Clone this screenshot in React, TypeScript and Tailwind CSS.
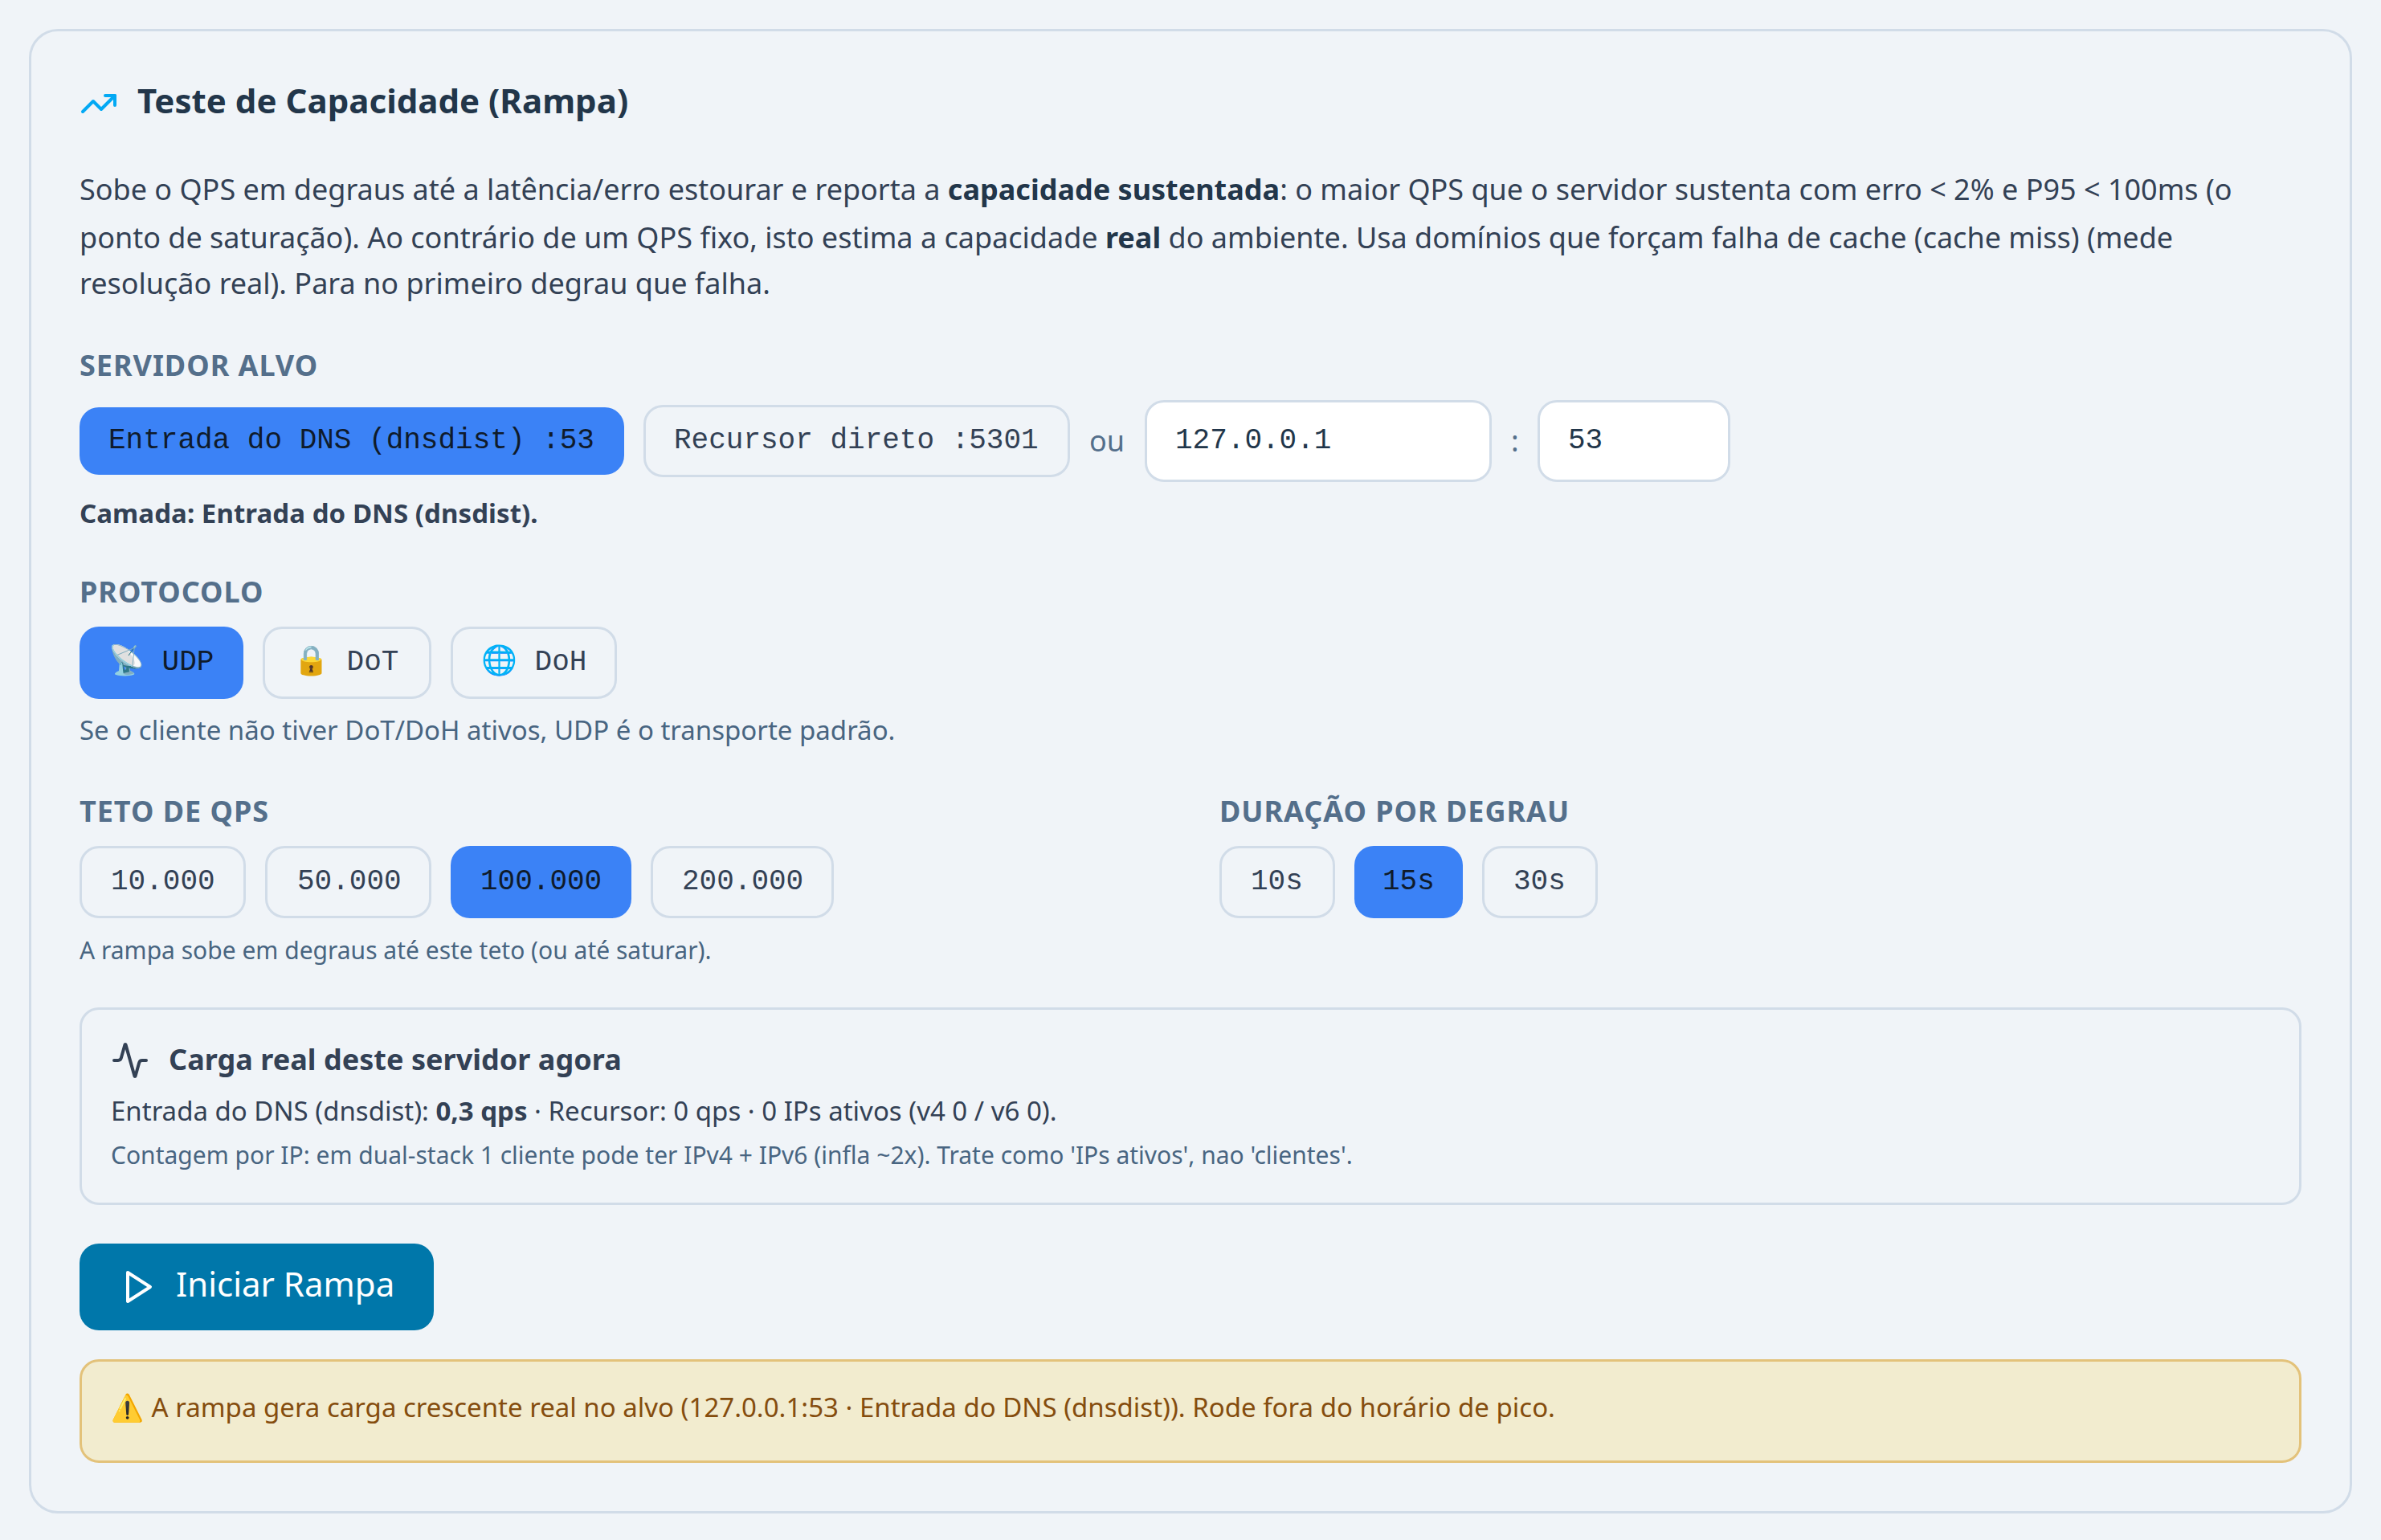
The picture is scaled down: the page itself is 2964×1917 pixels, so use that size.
import React from "react";

const label =
  "mb-[19px] pt-px text-[36px] leading-[48px] font-bold uppercase tracking-[0.97px] text-[#546f8b]";

function Chip({
  active = false,
  size,
  children,
}: {
  active?: boolean;
  size: string;
  children: React.ReactNode;
}) {
  return (
    <button
      type="button"
      className={[
        "shrink-0 rounded-[24px] py-[18px] text-left font-['Liberation_Mono',monospace] text-[36px] leading-[48px] whitespace-pre",
        active ? "bg-[#3b82f6] text-[#0f1b2b]" : "border-[3px] border-[#d1dce8] text-[#334155]",
        size,
      ].join(" ")}
    >
      {children}
    </button>
  );
}

function Stroke({ className, children }: { className: string; children: React.ReactNode }) {
  return (
    <svg
      viewBox="0 0 24 24"
      fill="none"
      stroke="currentColor"
      strokeWidth="2"
      strokeLinecap="round"
      strokeLinejoin="round"
      className={className}
    >
      {children}
    </svg>
  );
}

export default function App() {
  return (
    <div className="h-[1917px] w-[2964px] bg-[#f0f4f8] p-9 pb-[33px] font-['Noto_Sans',sans-serif] text-[#334155]">
      <section className="flex h-full flex-col rounded-[36px] border-[3px] border-[#d1dce8] p-[60px]">
        <div className="flex h-[60px] items-center gap-6">
          <Stroke className="size-12 shrink-0 text-[#03a9f4]">
            <polyline points="22 7 13.5 15.5 8.5 10.5 2 17" />
            <polyline points="16 7 22 7 22 13" />
          </Stroke>
          <h2 className="pb-2 text-[42px] leading-[60px] font-bold tracking-[0.03px] text-[#22364a]">
            Teste de Capacidade (Rampa)
          </h2>
        </div>

        <p className="mt-[47px] h-[176px] text-[36px] whitespace-nowrap">
          <span className="block leading-[60px]">
            Sobe o QPS em degraus até a latência/erro estourar e reporta a{" "}
            <strong className="font-bold text-[#22364a]">capacidade sustentada</strong>: o maior QPS que o
            servidor sustenta com erro &lt; 2% e P95 &lt; 100ms (o
          </span>
          <span className="block leading-[60px]">
            ponto de saturação). Ao contrário de um QPS fixo, isto estima a capacidade{" "}
            <strong className="font-bold text-[#22364a]">real</strong> do ambiente. Usa domínios que forçam
            falha de cache (cache miss) (mede
          </span>
          <span className="block leading-[54px]">resolução real). Para no primeiro degrau que falha.</span>
        </p>

        <div className="mt-12">
          <div className={label}>Servidor alvo</div>
          <div className="flex items-center gap-6">
            <Chip active size="w-[678px] pl-9">Entrada do DNS (dnsdist) :53</Chip>
            <Chip size="w-[531px] pl-[35px]">Recursor direto :5301</Chip>
            <span className="w-[45px] text-[36px] leading-[48px] text-[#546f8b]">ou</span>
            <input
              readOnly
              value="127.0.0.1"
              className="h-[102px] w-[432px] rounded-[24px] border-[3px] border-[#d1dce8] bg-white px-[35px] pb-0.5 font-['Liberation_Mono',monospace] text-[36px] text-[#22364a] outline-none"
            />
            <span className="w-[9px] text-[36px] leading-[48px] text-[#546f8b]">:</span>
            <input
              readOnly
              value="53"
              className="h-[102px] w-[240px] rounded-[24px] border-[3px] border-[#d1dce8] bg-white px-[35px] pb-0.5 font-['Liberation_Mono',monospace] text-[36px] text-[#22364a] outline-none"
            />
          </div>
          <p className="mt-[15px] text-[33px] leading-[48px] font-bold tracking-[0.06px]">
            Camada: Entrada do DNS (dnsdist).
          </p>
        </div>

        <div className="mt-[49px]">
          <div className={label}>Protocolo</div>
          <div className="flex gap-6">
            <Chip active size="w-[204px] pl-9">📡 UDP</Chip>
            <Chip size="w-[210px] pl-[35px]">🔒 DoT</Chip>
            <Chip size="w-[207px] pl-[35px]">🌐 DoH</Chip>
          </div>
          <p className="mt-[15px] text-[33px] leading-[48px] text-[#486581]">
            Se o cliente não tiver DoT/DoH ativos, UDP é o transporte padrão.
          </p>
        </div>

        <div className="mt-[52px] grid grid-cols-2 gap-[72px]">
          <div>
            <div className={label}>Teto de QPS</div>
            <div className="flex gap-6">
              <Chip size="w-[207px] pl-9">10.000</Chip>
              <Chip size="w-[207px] pl-[37px]">50.000</Chip>
              <Chip active size="w-[225px] pl-[37px]">100.000</Chip>
              <Chip size="w-[228px] pl-9">200.000</Chip>
            </div>
            <p className="mt-4 text-[30px] leading-[48px] text-[#486581]">
              A rampa sobe em degraus até este teto (ou até saturar).
            </p>
          </div>
          <div>
            <div className={label}>Duração por degrau</div>
            <div className="flex gap-6">
              <Chip size="w-[144px] pl-9">10s</Chip>
              <Chip active size="w-[135px] pl-[35px]">15s</Chip>
              <Chip size="w-[144px] pl-9">30s</Chip>
            </div>
          </div>
        </div>

        <div className="mt-[47px] h-[246px] rounded-[24px] border-[3px] border-[#d1dce8] p-9">
          <div className="flex h-[54px] items-center gap-6">
            <Stroke className="size-12 shrink-0">
              <path d="M22 12h-2.48a2 2 0 0 0-1.93 1.46l-2.35 8.36a.25.25 0 0 1-.48 0L9.24 2.18a.25.25 0 0 0-.48 0l-2.35 8.36A2 2 0 0 1 4.49 12H2" />
            </Stroke>
            <h3 className="pb-0.5 text-[36px] leading-[54px] font-bold tracking-[0.03px]">
              Carga real deste servidor agora
            </h3>
          </div>
          <p className="mt-3 text-[33px] leading-[48px]">
            Entrada do DNS (dnsdist): <strong className="font-bold">0,3 qps</strong> · Recursor: 0 qps · 0 IPs
            ativos (v4 0 / v6 0).
          </p>
          <p className="mt-[7px] text-[30px] leading-[48px] text-[#486581]">
            Contagem por IP: em dual-stack 1 cliente pode ter IPv4 + IPv6 (infla ~2x). Trate como 'IPs ativos',
            nao 'clientes'.
          </p>
        </div>

        <button
          type="button"
          className="mt-12 flex h-[108px] w-[441px] items-center gap-6 self-start rounded-[24px] bg-[#0077aa] px-12 whitespace-nowrap text-white"
        >
          <Stroke className="size-12 shrink-0">
            <polygon points="6 3 20 12 6 21 6 3" />
          </Stroke>
          <span className="pb-2 text-[42px] leading-[60px]">Iniciar Rampa</span>
        </button>

        <div className="mt-9 h-[129px] rounded-[24px] border-[3px] border-[#e3c27a] bg-[#f2eccf] px-9 pt-[33px] text-[33px] leading-[48px] text-[#854d0e]">
          <span className="mr-px">⚠️</span> A rampa gera carga crescente real no alvo (127.0.0.1:53 · Entrada do
          DNS (dnsdist)). Rode fora do horário de pico.
        </div>
      </section>
    </div>
  );
}
